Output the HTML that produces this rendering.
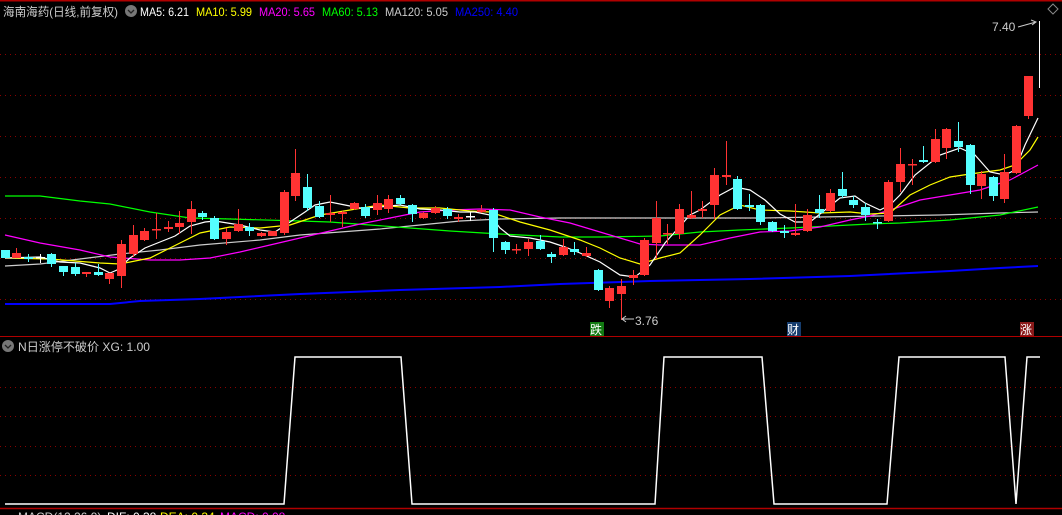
<!DOCTYPE html>
<html><head><meta charset="utf-8"><style>
body{margin:0;background:#000;width:1062px;height:515px;overflow:hidden;font-family:"Liberation Sans","Noto Sans CJK SC",sans-serif}
svg{display:block}
</style></head><body>
<svg width="1062" height="515" xmlns="http://www.w3.org/2000/svg" font-family="Liberation Sans, Noto Sans CJK SC, sans-serif">
<rect width="1062" height="515" fill="#000"/>
<line x1="0" y1="0.5" x2="1062" y2="0.5" stroke="#b00000" stroke-width="2"/>
<g stroke="#8a0000" stroke-width="1" stroke-dasharray="1,4">
<line x1="0" y1="54.5" x2="1062" y2="54.5"/><line x1="0" y1="95.5" x2="1062" y2="95.5"/>
<line x1="0" y1="136.5" x2="1062" y2="136.5"/><line x1="0" y1="177.5" x2="1062" y2="177.5"/>
<line x1="0" y1="218.5" x2="1062" y2="218.5"/><line x1="0" y1="258.5" x2="1062" y2="258.5"/>
<line x1="0" y1="299.5" x2="1062" y2="299.5"/>
<line x1="0" y1="387.5" x2="1062" y2="387.5"/><line x1="0" y1="416.5" x2="1062" y2="416.5"/>
<line x1="0" y1="446.5" x2="1062" y2="446.5"/><line x1="0" y1="475.5" x2="1062" y2="475.5"/>
</g>
<line x1="0" y1="336.5" x2="1062" y2="336.5" stroke="#b00000"/>
<line x1="0" y1="508.5" x2="1062" y2="508.5" stroke="#b00000" stroke-width="1.5"/>
<!-- header -->
<text x="3" y="16" font-size="12" fill="#ccc" textLength="115" lengthAdjust="spacingAndGlyphs">海南海药(日线,前复权)</text>
<circle cx="131" cy="11" r="6" fill="#777"/><path d="M128 10 l3 3 l3 -3" stroke="#222" fill="none" stroke-width="1.3"/>
<text x="140" y="16" font-size="12" fill="#fff" textLength="49" lengthAdjust="spacingAndGlyphs">MA5: 6.21</text>
<text x="196" y="16" font-size="12" fill="#ff0" textLength="56" lengthAdjust="spacingAndGlyphs">MA10: 5.99</text>
<text x="259" y="16" font-size="12" fill="#f0f" textLength="56" lengthAdjust="spacingAndGlyphs">MA20: 5.65</text>
<text x="322" y="16" font-size="12" fill="#0f0" textLength="56" lengthAdjust="spacingAndGlyphs">MA60: 5.13</text>
<text x="385" y="16" font-size="12" fill="#ccc" textLength="63" lengthAdjust="spacingAndGlyphs">MA120: 5.05</text>
<text x="455" y="16" font-size="12" fill="#0000ff" textLength="63" lengthAdjust="spacingAndGlyphs">MA250: 4.40</text>
<path d="M1053 4 l5 5 l-5 5 l-5 -5z" stroke="#888" fill="none"/>
<!-- MAs -->
<g fill="none" stroke-width="1.2">
<polyline stroke="#0000ff" stroke-width="2" points="5,304 110,304 140,301 200,299 300,294 400,290 500,287 560,284 650,281 750,279 850,276 950,271 1000,268 1038,266"/>
<polyline stroke="#ccc" points="5,266 40,264 80,259 120,254 160,250 200,245 260,240 300,235 340,232 380,229 420,225 460,221 500,219 560,218 620,218 700,218 760,218 820,217 880,216 940,215 1000,213 1038,212"/>
<polyline stroke="#0f0" points="5,196 40,196 80,201 110,204 150,212 190,218 230,219 300,221 330,222 370,225 410,228 450,231 500,234 560,237 600,237 660,236 700,232 740,230 790,228 830,226 870,224 900,223 950,220 1000,215 1038,207"/>
<polyline stroke="#f0f" points="5,235 40,243 80,250 110,257 150,260 180,260 210,258 240,252 270,245 300,238 330,231 360,224 390,218 420,212 450,210 480,209 510,210 540,217 570,223 600,232 620,238 640,244 660,245 700,245 730,238 760,232 790,231 820,227 850,220 870,216 890,210 920,200 950,195 980,190 1010,180 1038,165"/>
<polyline stroke="#ff0" points="5,258 50,259 100,263 120,264 150,258 180,243 200,233 230,227 260,228 290,225 320,215 350,210 380,205 410,208 440,208 470,211 490,212 520,222 550,230 580,240 600,248 620,258 640,264 660,258 680,253 700,235 720,215 740,205 760,210 790,211 820,213 850,212 870,214 890,213 910,195 930,185 950,177 970,174 1000,170 1015,165 1030,150 1038,137"/>
<polyline stroke="#fff" points="5,258 40,257 60,262 80,263 100,268 110,273 117,270 130,258 145,248 160,242 175,236 190,226 205,222 215,221 240,225 260,230 275,232 290,222 305,212 315,205 330,202 345,205 360,208 380,207 400,205 420,209 440,210 460,212 475,212 490,215 500,228 510,236 530,238 550,242 565,247 580,253 600,262 620,275 635,277 650,265 665,243 690,215 700,210 720,195 735,187 750,190 765,200 780,214 795,222 810,222 825,210 840,198 855,196 865,203 880,210 890,205 900,195 915,175 940,155 960,148 975,155 990,172 1005,175 1015,170 1025,145 1038,118"/>
</g>
<g id="candles"></g>
<line x1="1039.5" y1="21" x2="1039.5" y2="88" stroke="#fff"/>
<text x="992" y="31" font-size="12" fill="#ccc">7.40</text>
<path d="M1018 27 L1036 22 M1031 20 L1036 22 L1032 25" stroke="#ccc" fill="none"/>
<text x="635" y="325" font-size="12" fill="#ccc">3.76</text>
<path d="M622 319 H634 M626 316 L622 319 L626 322" stroke="#ccc" fill="none"/>
<rect x="590" y="322" width="14" height="14" fill="#127a12"/><text x="590" y="334" font-size="12" fill="#fff">跌</text>
<rect x="787" y="322" width="14" height="14" fill="#163d6e"/><text x="787" y="334" font-size="12" fill="#fff">财</text>
<rect x="1020" y="322" width="14" height="14" fill="#8a1a1a"/><text x="1020" y="334" font-size="12" fill="#fff">涨</text>
<!-- lower panel -->
<circle cx="8" cy="346" r="6" fill="#777"/><path d="M5 345 l3 3 l3 -3" stroke="#222" fill="none" stroke-width="1.3"/>
<text x="18" y="351" font-size="12" fill="#ccc" textLength="132" lengthAdjust="spacingAndGlyphs">N日涨停不破价  XG: 1.00</text>
<polyline fill="none" stroke="#fff" stroke-width="1.5" points="5,504 284,504 295,357 401,357 412,504 655,504 664,357 762,357 774,504 887,504 899,357 1005,357 1016,504 1027,357 1040,357"/>
<text x="18" y="521" font-size="12" fill="#ccc">MACD(12,26,9)</text>
<text x="107" y="521" font-size="12" fill="#fff">DIF: 0.38</text>
<text x="160" y="521" font-size="12" fill="#ff0">DEA: 0.34</text>
<text x="220" y="521" font-size="12" fill="#f0f">MACD: 0.08</text>
</svg>
<script>
var d=[[5,'c',250,258,250,258],[16,'r',253,258,248,258],[28,'c',257,259,254,262],[40,'w',257,257,254,263],[51,'c',254,264,253,267],[63,'c',266,272,266,276],[75,'c',267,274,263,276],[86,'r',272,274,272,277],[98,'c',272,275,264,276],[109,'r',273,279,273,284],[121,'r',244,276,240,288],[133,'r',235,254,225,257],[144,'r',231,240,228,241],[156,'r',229,229,213,239],[168,'r',227,229,221,232],[179,'r',223,227,211,234],[191,'r',209,222,201,234],[202,'c',213,217,211,220],[214,'c',218,239,216,240],[226,'r',232,239,228,245],[238,'r',224,231,209,232],[249,'c',227,231,223,236],[261,'r',233,236,232,237],[272,'r',231,236,231,236],[284,'r',192,233,190,235],[295,'r',173,196,149,201],[307,'c',187,208,174,211],[319,'c',206,217,201,218],[330,'r',213,215,195,222],[342,'r',212,214,211,227],[354,'r',203,209,202,210],[365,'c',207,216,204,218],[377,'r',203,210,195,215],[388,'r',199,209,195,213],[400,'c',198,204,195,205],[412,'c',205,214,204,222],[423,'r',213,218,212,219],[435,'r',208,213,206,214],[447,'c',209,216,207,219],[458,'r',217,219,214,222],[470,'w',216,216,212,221],[481,'r',210,212,205,213],[493,'c',210,238,208,252],[505,'c',242,250,241,254],[516,'r',249,249,244,254],[528,'r',242,249,239,256],[540,'c',241,249,235,250],[551,'c',254,257,252,263],[563,'r',247,255,239,256],[574,'c',249,252,242,255],[586,'r',253,256,247,257],[598,'c',270,290,269,291],[609,'r',288,301,286,308],[621,'r',286,294,279,320],[633,'r',275,278,270,285],[644,'r',240,275,238,276],[656,'r',218,243,201,259],[667,'r',233,233,224,244],[679,'r',209,234,204,239],[691,'r',215,218,191,219],[702,'r',209,211,201,218],[714,'r',175,205,168,219],[726,'r',175,177,141,185],[737,'c',179,209,176,210],[749,'c',205,207,194,211],[760,'c',205,222,204,225],[772,'c',222,231,221,232],[784,'c',231,233,225,238],[795,'r',233,235,204,236],[807,'r',215,231,209,232],[819,'c',209,213,195,218],[830,'r',193,211,189,212],[842,'c',189,196,172,198],[853,'c',200,205,196,208],[865,'c',207,215,203,221],[877,'c',222,222,219,229],[888,'r',182,221,180,222],[900,'r',164,182,148,192],[912,'r',164,164,159,185],[923,'c',160,162,146,163],[935,'r',139,162,129,163],[946,'r',129,148,128,159],[958,'c',141,147,122,152],[970,'c',145,185,144,194],[981,'r',174,186,171,199],[993,'c',177,196,176,201],[1004,'r',172,199,154,203],[1016,'r',126,173,125,174],[1028,'r',76,116,76,119]];
var col={r:'#ff3333',c:'#55ffff',w:'#ffffff'},s='';
d.forEach(function(a){var x=a[0],c=col[a[1]],h=a[3]-a[2];
s+='<line x1="'+(x+0.5)+'" y1="'+a[4]+'" x2="'+(x+0.5)+'" y2="'+a[5]+'" stroke="'+c+'"/>';
s+='<rect x="'+(x-4)+'" y="'+a[2]+'" width="9" height="'+Math.max(h,1.5)+'" fill="'+c+'"/>';});
document.getElementById('candles').innerHTML=s;
</script>
</body></html>
